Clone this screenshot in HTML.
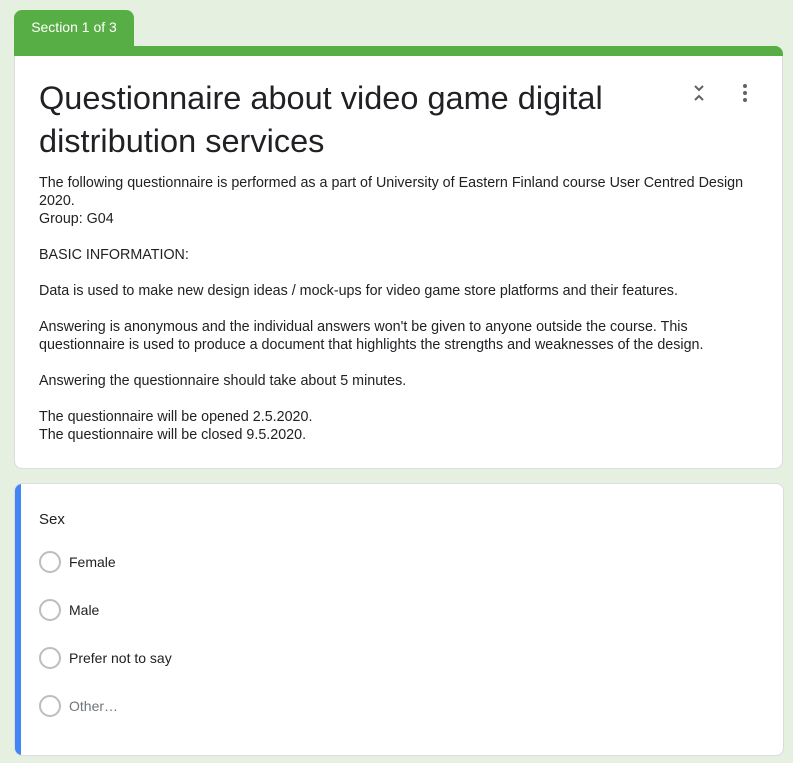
<!DOCTYPE html>
<html><head><meta charset="utf-8"><style>
body{margin:0;background:#e5f0e1;width:793px;height:763px;overflow:hidden;font-family:"Liberation Sans",Arial,sans-serif;color:#202124;position:relative}
.tab{position:absolute;left:14px;top:10px;width:120px;height:40px;background:#57ae45;border-radius:8px 8px 0 0;color:#fff;font-size:14px;line-height:34px;text-align:center}
.bar{position:absolute;left:14px;top:46px;width:769px;height:10px;background:#57ae45;border-radius:0 8px 0 0}
.card1{position:absolute;left:14px;top:56px;width:767px;height:412px;background:#fff;border:1px solid #dadce0;border-top:none;border-radius:0 0 8px 8px}
h1{position:absolute;left:24px;top:21px;margin:0;font-weight:400;font-size:32.5px;line-height:43px;width:620px}
.desc{position:absolute;left:24px;top:118px;font-size:14.3px;line-height:18px;width:715px}
.card2{position:absolute;left:14px;top:483px;width:768px;height:271px;background:#fff;border:1px solid #dadce0;border-radius:8px;overflow:hidden}
.card2:before{content:"";position:absolute;left:0;top:0;bottom:0;width:6px;background:#4285f4}
.q{position:absolute;left:24px;top:27px;font-size:15px}
.opt{position:absolute;left:24px;font-size:14px;height:20px;line-height:20px}
.opt i{position:absolute;left:0;top:-1px;width:18px;height:18px;border:2px solid #bdbdbd;border-radius:50%}
.opt span{position:absolute;left:30px;white-space:nowrap}
</style></head><body>
<div class="tab">Section 1 of 3</div>
<div class="bar"></div>
<div class="card1">
<h1>Questionnaire about video game digital distribution services</h1>
<svg style="position:absolute;left:676px;top:28px" width="16" height="18" viewBox="0 0 16 18"><path d="M4 2l4 4 4-4M4 16l4-4 4 4" stroke="#5f6368" stroke-width="2" fill="none"/></svg>
<svg style="position:absolute;left:727px;top:27px" width="6" height="20"><circle cx="3" cy="3" r="2" fill="#5f6368"/><circle cx="3" cy="10" r="2" fill="#5f6368"/><circle cx="3" cy="17" r="2" fill="#5f6368"/></svg>
<div class="desc">The following questionnaire is performed as a part of University of Eastern Finland course User Centred Design 2020.<br>Group: G04<br><br>BASIC INFORMATION:<br><br>Data is used to make new design ideas / mock-ups for video game store platforms and their features.<br><br>Answering is anonymous and the individual answers won't be given to anyone outside the course. This questionnaire is used to produce a document that highlights the strengths and weaknesses of the design.<br><br>Answering the questionnaire should take about 5 minutes.<br><br>The questionnaire will be opened 2.5.2020.<br>The questionnaire will be closed 9.5.2020.</div>
</div>
<div class="card2">
<div class="q">Sex</div>
<div class="opt" style="top:68px"><i></i><span>Female</span></div>
<div class="opt" style="top:116px"><i></i><span>Male</span></div>
<div class="opt" style="top:164px"><i></i><span>Prefer not to say</span></div>
<div class="opt" style="top:212px"><i></i><span style="color:#70757a">Other…</span></div>
</div>
</body></html>
